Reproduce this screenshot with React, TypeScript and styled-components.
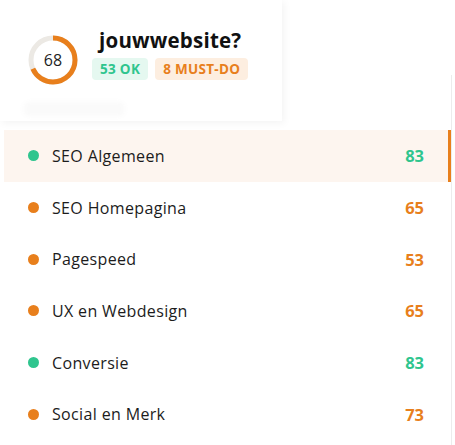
import React from "react";
import styled, { createGlobalStyle } from "styled-components";

const GREEN = "#2fc58e";
const ORANGE = "#e87f1c";

const GlobalStyle = createGlobalStyle`
  html, body {
    margin: 0;
    padding: 0;
    background: #ffffff;
  }
  body {
    font-family: "Open Sans", "Noto Sans", sans-serif;
    color: #1c1c1c;
  }
`;

const Page = styled.div`
  display: flex;
  width: 455px;
  height: 445px;
  overflow: hidden;
  background: #fff;
`;

const Main = styled.div`
  width: 451px;
  display: flex;
  flex-direction: column;
`;

const Rail = styled.div`
  width: 1px;
  margin-top: 75px;
  background: #ececec;
`;

const Card = styled.div`
  position: relative;
  width: 282px;
  height: 121px;
  box-sizing: border-box;
  padding: 28px 0 0 28px;
  background: #fff;
  box-shadow: 2px 2px 8px rgba(0, 0, 0, 0.05);
  display: flex;
  align-items: flex-start;
  gap: 14px;
`;

const Skeleton = styled.div`
  position: absolute;
  left: 24px;
  top: 102px;
  width: 100px;
  height: 14px;
  border-radius: 4px;
  background: #fafafa;
  filter: blur(2px);
`;

const RingWrap = styled.div`
  position: relative;
  width: 50px;
  height: 50px;
  margin-top: 7px;
  flex-shrink: 0;
`;

const RingValue = styled.span`
  position: absolute;
  inset: 0;
  display: flex;
  align-items: center;
  justify-content: center;
  font-size: 16px;
  font-weight: 500;
  color: #1e1e1e;
`;

const Info = styled.div`
  display: flex;
  flex-direction: column;
  align-items: center;
`;

const Title = styled.h1`
  margin: 0 0 6px;
  font-size: 20.5px;
  line-height: 24px;
  font-weight: 700;
  color: #111;
  letter-spacing: 0.2px;
`;

const Badges = styled.div`
  display: flex;
  gap: 7px;
`;

const Badge = styled.span<{ $tone: "ok" | "must" }>`
  height: 22px;
  padding: 0 8px;
  border-radius: 4px;
  display: inline-flex;
  align-items: center;
  font-size: 13.5px;
  font-weight: 700;
  letter-spacing: 0.3px;
  background: ${(p) => (p.$tone === "ok" ? "#e5f8f0" : "#fdeee0")};
  color: ${(p) => (p.$tone === "ok" ? GREEN : ORANGE)};
`;

const List = styled.ul`
  list-style: none;
  margin: 9px 0 0 4px;
  padding: 0;
`;

const Row = styled.li<{ $active?: boolean }>`
  height: 51.7px;
  display: flex;
  align-items: center;
  box-sizing: border-box;
  padding: 0 24px 0 24px;
  background: ${(p) => (p.$active ? "#fdf5ef" : "transparent")};
  border-right: 3px solid ${(p) => (p.$active ? ORANGE : "transparent")};
`;

const Dot = styled.span<{ $color: string }>`
  width: 11px;
  height: 11px;
  border-radius: 50%;
  background: ${(p) => p.$color};
  flex-shrink: 0;
`;

const Label = styled.span`
  margin-left: 13px;
  flex: 1;
  font-size: 16px;
  font-weight: 500;
  letter-spacing: 0.35px;
  color: #1c1c1c;
`;

const Score = styled.span<{ $color: string }>`
  font-size: 16.5px;
  font-weight: 700;
  color: ${(p) => p.$color};
`;

const categories = [
  { name: "SEO Algemeen", score: 83 },
  { name: "SEO Homepagina", score: 65 },
  { name: "Pagespeed", score: 53 },
  { name: "UX en Webdesign", score: 65 },
  { name: "Conversie", score: 83 },
  { name: "Social en Merk", score: 73 },
];

function Ring({ value }: { value: number }) {
  const r = 22;
  const c = 2 * Math.PI * r;
  return (
    <RingWrap>
      <svg width="50" height="50" viewBox="0 0 50 50">
        <circle cx="25" cy="25" r={r} fill="none" stroke="#ece9e4" strokeWidth="5" />
        <circle
          cx="25"
          cy="25"
          r={r}
          fill="none"
          stroke={ORANGE}
          strokeWidth="5"
          strokeDasharray={`${(c * value) / 100} ${c}`}
          transform="rotate(-90 25 25)"
        />
      </svg>
      <RingValue>{value}</RingValue>
    </RingWrap>
  );
}

export default function App() {
  return (
    <Page>
      <GlobalStyle />
      <Main>
        <Card>
          <Ring value={68} />
          <Info>
            <Title>jouwwebsite?</Title>
            <Badges>
              <Badge $tone="ok">53 OK</Badge>
              <Badge $tone="must">8 MUST-DO</Badge>
            </Badges>
          </Info>
          <Skeleton />
        </Card>
        <List>
          {categories.map((cat, i) => {
            const color = cat.score >= 80 ? GREEN : ORANGE;
            return (
              <Row key={cat.name} $active={i === 0}>
                <Dot $color={color} />
                <Label>{cat.name}</Label>
                <Score $color={color}>{cat.score}</Score>
              </Row>
            );
          })}
        </List>
      </Main>
      <Rail />
    </Page>
  );
}
